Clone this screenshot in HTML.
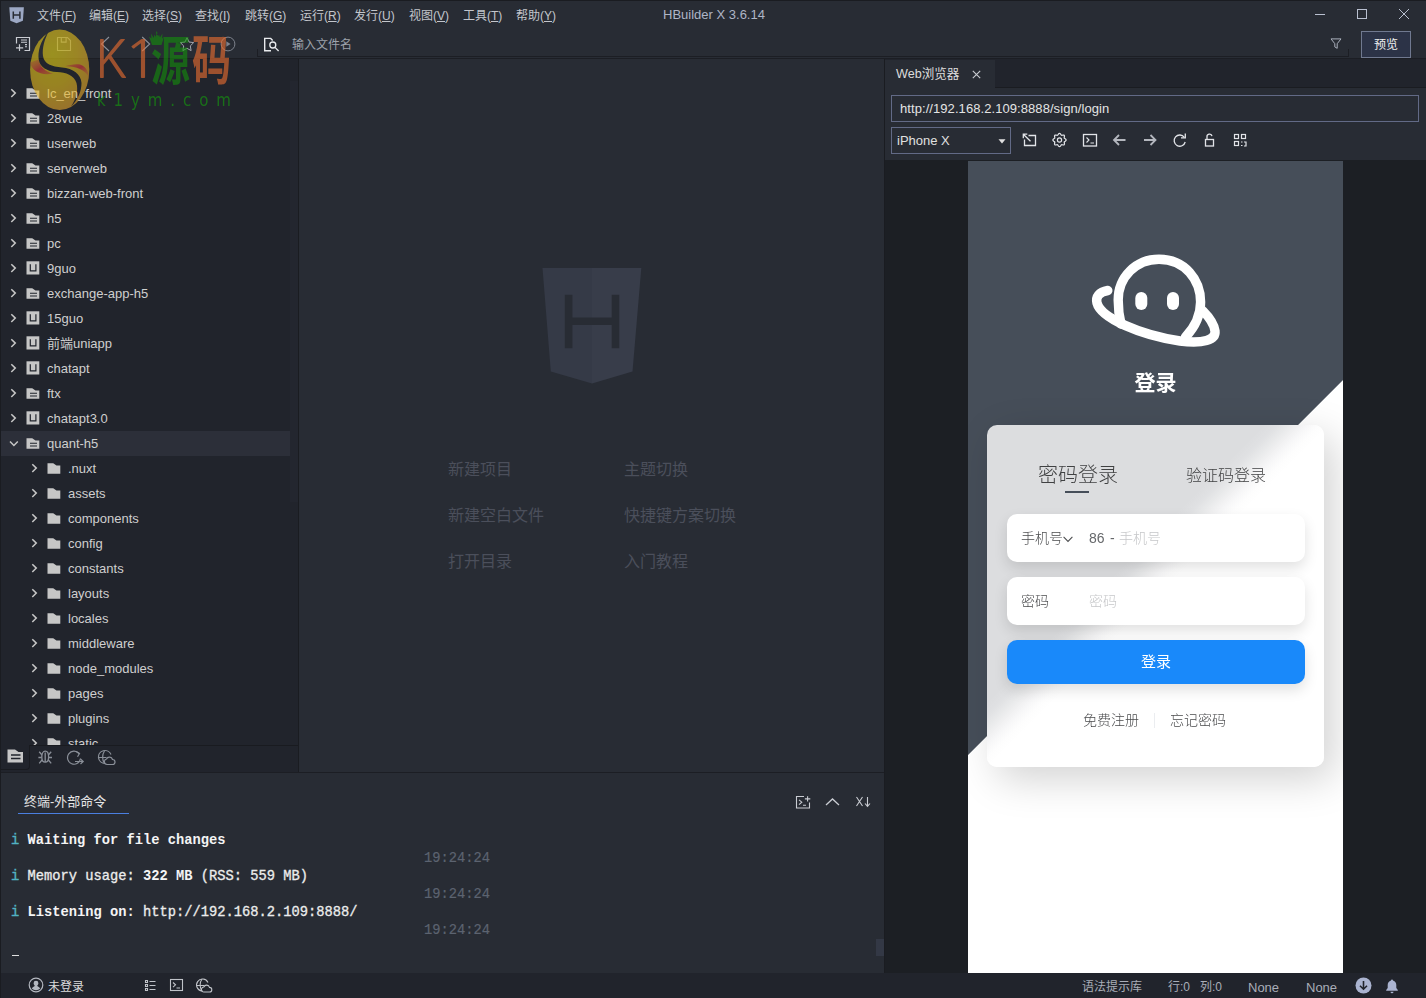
<!DOCTYPE html>
<html lang="zh-CN">
<head>
<meta charset="utf-8">
<title>HBuilder X 3.6.14</title>
<style>
*{box-sizing:border-box;margin:0;padding:0}
html,body{width:1426px;height:998px;overflow:hidden;background:#282c34}
body{position:relative;font-family:"Liberation Sans","Noto Sans CJK SC",sans-serif;font-size:13px;color:#c8c8c8;-webkit-font-smoothing:antialiased}
.abs{position:absolute}
svg{position:absolute;overflow:visible}
/* title + menu */
#titlebar{position:absolute;left:0;top:0;width:1426px;height:29px;background:#282c34}
.menu{position:absolute;top:1.500px;height:29px;line-height:29px;font-size:12px;color:#c3c6cc;white-space:nowrap}
#title{position:absolute;left:614px;width:200px;text-align:center;top:0;height:29px;line-height:29px;font-size:13px;color:#aeb5c6}
/* toolbar */
#toolbar{position:absolute;left:0;top:29px;width:1426px;height:30px;background:#282c34;border-bottom:1px solid #1c1e24}
#search{position:absolute;left:257px;top:33px;width:1092px;height:24px;border-bottom:1px solid #1c1e24}
#search:before,#search:after{content:"";position:absolute;bottom:0;width:1px;height:7px;background:#1c1e24}
#search:before{left:0}
#search:after{right:0}
#search span{position:absolute;left:35px;top:1px;line-height:23px;font-size:12px;color:#9da2ab}
#preview{position:absolute;left:1361px;top:31px;width:50px;height:27px;border:1px solid #707990;background:#2c3347;color:#f0f0f0;font-size:12px;text-align:center;line-height:27px}
/* sidebar */
#sidebar{position:absolute;left:0;top:59px;width:299px;height:713px;background:#21242c;border-right:1px solid #1a1c21;border-left:1px solid #1a1c21;overflow:hidden}
.row{position:absolute;left:0;width:290px;height:25px;line-height:25px;font-size:13px;color:#cfcfcf;white-space:nowrap}
.row.sel{background:#2c2f39}
.row span{position:absolute;top:0}
.l0 span{left:46px}
.l1 span{left:67px}
#sbtabs{position:absolute;left:0;top:686px;width:298px;height:27px;background:#21242c}
/* editor */
#editor{position:absolute;left:299px;top:59px;width:585px;height:713px;background:#282c34}
.hint{position:absolute;font-size:16px;color:#4b4f5b;white-space:nowrap;line-height:20px}
/* bottom */
#bottom{position:absolute;left:0;top:772px;width:884px;height:201px;background:#282c34;border-top:1px solid #1c1e24;border-left:1px solid #1a1c21}
.term{position:absolute;font-family:"Liberation Mono","Noto Sans Mono CJK SC",monospace;font-size:13.75px;white-space:pre;color:#ececec;line-height:18px;-webkit-text-stroke:.3px #ececec}
.term b{font-weight:bold;color:#f4f4f4;-webkit-text-stroke:0}
.term i{font-style:normal;color:#52b2c2;-webkit-text-stroke:.35px #52b2c2}
.term.ts{color:#5c6370;-webkit-text-stroke:.2px #5c6370}
/* status */
#status{position:absolute;left:0;top:973px;width:1426px;height:25px;background:#21242c}
.st{position:absolute;top:974.500px;height:25px;line-height:25px;font-size:12px;color:#a9aeb8;white-space:nowrap}
/* right */
#right{position:absolute;left:884px;top:59px;width:542px;height:914px;background:#1c1f24;border-left:1px solid #1a1c21}
#tabbar{position:absolute;left:885px;top:59px;width:541px;height:29px;background:#21242c;border-bottom:1px solid #1a1c21}
#tab{position:absolute;left:885px;top:60px;width:110px;height:28px;background:#282c34;color:#dcdcdc;font-size:12.600px;line-height:28px}
#navarea{position:absolute;left:885px;top:88px;width:541px;height:72px;background:#282c34}
#url{position:absolute;left:891px;top:95px;width:528px;height:27px;border:1px solid #626a86;color:#e4e4e4;font-size:13px;line-height:25px;padding-left:8px;letter-spacing:.07px}
#dev{position:absolute;left:891px;top:127px;width:120px;height:27px;border:1px solid #626a86;color:#e0e0e0;font-size:13px;line-height:25px;padding-left:5px}
/* phone */
#phone{will-change:transform;position:absolute;left:968px;top:161px;width:375px;height:812px;overflow:hidden;background:linear-gradient(135deg,#464e59 0,#464e59 419.6px,#ffffff 420.6px,#ffffff 100%);font-family:"Liberation Sans","Noto Sans CJK SC",sans-serif}
#card{position:absolute;left:19px;top:264px;width:337px;height:342px;border-radius:10px;background:linear-gradient(135deg,#dcdddf 0,#dcdddf 196px,#e0e1e3 205px,#e8e9ea 213px,#f0f0f1 220px,#f8f8f9 228px,#fdfdfd 235px,#fff 242px,#fff 100%);box-shadow:10px 12px 40px rgba(0,0,0,.18)}
.inp{position:absolute;left:20px;width:298px;height:48px;border-radius:10px;background:#fff;box-shadow:0 6px 14px rgba(0,0,0,.12);font-size:14px;line-height:48px;font-weight:300}
.inp span{position:absolute;top:0;white-space:nowrap}
#btn{position:absolute;left:20px;top:215px;width:298px;height:44px;border-radius:10px;background:#1989fa;color:#fff;font-size:15px;text-align:center;line-height:44px;box-shadow:0 6px 14px rgba(0,0,0,.12)}
#wm{position:absolute;left:0;top:0;width:300px;height:130px;opacity:.6;pointer-events:none}
</style>
</head>
<body>
<div id="titlebar"></div>
<svg style="left:9px;top:6.500px" width="16" height="17" viewBox="0 0 16 17"><path d="M0.300 0.300h14.600l-1 13.500L7.600 16.300 1.300 13.800z" fill="#9ca8c4"/><path d="M4.300 4.400v7.400M10.900 4.400v7.400M4.300 8h6.600" stroke="#282c34" stroke-width="1.500" fill="none"/></svg>
<div class="menu" style="left:37px">文件(<u>F</u>)</div>
<div class="menu" style="left:89px">编辑(<u>E</u>)</div>
<div class="menu" style="left:142px">选择(<u>S</u>)</div>
<div class="menu" style="left:195px">查找(<u>I</u>)</div>
<div class="menu" style="left:245px">跳转(<u>G</u>)</div>
<div class="menu" style="left:300px">运行(<u>R</u>)</div>
<div class="menu" style="left:354px">发行(<u>U</u>)</div>
<div class="menu" style="left:409px">视图(<u>V</u>)</div>
<div class="menu" style="left:463px">工具(<u>T</u>)</div>
<div class="menu" style="left:516px">帮助(<u>Y</u>)</div>
<svg style="left:1300px;top:0" width="126" height="29" viewBox="0 0 126 29" fill="none" stroke="#b9c0d0" stroke-width="1"><path d="M15 14.500h10"/><rect x="57.500" y="9.500" width="9" height="9"/><path d="M99 9l10 10M109 9l-10 10"/></svg>
<div id="title">HBuilder X 3.6.14</div>
<div id="toolbar"></div>
<div id="search"><span>输入文件名</span></div>
<svg id="tbicons" style="left:0;top:29px" width="300" height="30" viewBox="0 0 300 30" fill="none" stroke="#c9ccd2" stroke-width="1.2">
<g><path d="M16.500 14.500v-6h13v13h-5"/><path d="M21 11h6M21 13.300h6M25 15.600h2M25 17.700h2" stroke-width="1.1"/><path d="M16 18.800h7.200M19.500 15.300v6.800"/></g>
<g stroke="#7d828c" stroke-width="1.1"><path d="M57.500 8.500h10l3 3v10h-13z"/><path d="M61.300 8.500v4.600h4.800v-4.600"/></g>
<g stroke="#8b9099" stroke-width="1.100"><path d="M109 8l-7.500 7 7.500 7"/><path d="M142.200 8l7.500 7-7.500 7"/></g>
<path stroke="#a4a8b0" stroke-width="1" d="M187 8.700l2 4.300 4.700 .6-3.400 3.300 .8 4.700-4.100-2.300-4.100 2.300 .8-4.700-3.400-3.300 4.700-.6z"/>
<g stroke="#7d828c" stroke-width="1"><circle cx="228" cy="15" r="6.900"/><path d="M226.300 12.300l4.300 2.700-4.300 2.700z" fill="#7d828c" stroke="none"/></g>
<g stroke="#e9ebee" stroke-width="1.400"><path d="M271 21.800h-6.300v-12.400h6l2 2"/><circle cx="272.800" cy="16" r="3" stroke-width="1.300"/><path d="M275 18.400l3.600 3.600" stroke-width="1.300"/></g>
</svg>
<svg style="left:1330px;top:38px" width="12" height="12" viewBox="0 0 12 12" fill="none" stroke="#aab0bc" stroke-width="1"><path d="M1 .9h10l-3.800 4.800v4.600l-2.400-1.400v-3.200z"/></svg>
<div id="preview">预览</div>
<div id="sidebar">
<svg width="0" height="0" style="position:absolute"><defs>
<symbol id="ip" viewBox="0 0 14 12"><path d="M0.500 0.200h5.700l3.300 2.200h3.800v8.400h-12.800z" fill="#c6c6c6"/><path d="M4 5.300h7M4 8h7" stroke="#21242c" stroke-width="1.100"/></symbol>
<symbol id="iu" viewBox="0 0 14 14"><rect x=".5" y=".3" width="12.800" height="13.200" fill="#c6c6c6"/><path d="M4.300 3.300v6.500h5.600v-6.500" fill="none" stroke="#21242c" stroke-width="1.200"/></symbol>
<symbol id="if" viewBox="0 0 14 12"><path d="M0.500 0.200h5.700l3.300 2.200h3.800v8.400h-12.800z" fill="#c6c6c6"/></symbol>
<symbol id="cr" viewBox="0 0 8 12"><path d="M1.300 2.200l4 3.900-4 3.900" fill="none" stroke="#c6c6c6" stroke-width="1.500"/></symbol>
<symbol id="cd" viewBox="0 0 12 8"><path d="M2 1.500l3.900 4 3.900-4" fill="none" stroke="#c6c6c6" stroke-width="1.500"/></symbol>
</defs></svg>
<div class="row l0" style="top:22px"><svg style="left:9px;top:6px" width="8" height="12"><use href="#cr"/></svg><svg style="left:25px;top:7px" width="14" height="12"><use href="#ip"/></svg><span>lc_en_front</span></div>
<div class="row l0" style="top:47px"><svg style="left:9px;top:6px" width="8" height="12"><use href="#cr"/></svg><svg style="left:25px;top:7px" width="14" height="12"><use href="#ip"/></svg><span>28vue</span></div>
<div class="row l0" style="top:72px"><svg style="left:9px;top:6px" width="8" height="12"><use href="#cr"/></svg><svg style="left:25px;top:7px" width="14" height="12"><use href="#ip"/></svg><span>userweb</span></div>
<div class="row l0" style="top:97px"><svg style="left:9px;top:6px" width="8" height="12"><use href="#cr"/></svg><svg style="left:25px;top:7px" width="14" height="12"><use href="#ip"/></svg><span>serverweb</span></div>
<div class="row l0" style="top:122px"><svg style="left:9px;top:6px" width="8" height="12"><use href="#cr"/></svg><svg style="left:25px;top:7px" width="14" height="12"><use href="#ip"/></svg><span>bizzan-web-front</span></div>
<div class="row l0" style="top:147px"><svg style="left:9px;top:6px" width="8" height="12"><use href="#cr"/></svg><svg style="left:25px;top:7px" width="14" height="12"><use href="#ip"/></svg><span>h5</span></div>
<div class="row l0" style="top:172px"><svg style="left:9px;top:6px" width="8" height="12"><use href="#cr"/></svg><svg style="left:25px;top:7px" width="14" height="12"><use href="#ip"/></svg><span>pc</span></div>
<div class="row l0" style="top:197px"><svg style="left:9px;top:6px" width="8" height="12"><use href="#cr"/></svg><svg style="left:25px;top:5px" width="14" height="14"><use href="#iu"/></svg><span>9guo</span></div>
<div class="row l0" style="top:222px"><svg style="left:9px;top:6px" width="8" height="12"><use href="#cr"/></svg><svg style="left:25px;top:7px" width="14" height="12"><use href="#ip"/></svg><span>exchange-app-h5</span></div>
<div class="row l0" style="top:247px"><svg style="left:9px;top:6px" width="8" height="12"><use href="#cr"/></svg><svg style="left:25px;top:5px" width="14" height="14"><use href="#iu"/></svg><span>15guo</span></div>
<div class="row l0" style="top:272px"><svg style="left:9px;top:6px" width="8" height="12"><use href="#cr"/></svg><svg style="left:25px;top:5px" width="14" height="14"><use href="#iu"/></svg><span>前端uniapp</span></div>
<div class="row l0" style="top:297px"><svg style="left:9px;top:6px" width="8" height="12"><use href="#cr"/></svg><svg style="left:25px;top:5px" width="14" height="14"><use href="#iu"/></svg><span>chatapt</span></div>
<div class="row l0" style="top:322px"><svg style="left:9px;top:6px" width="8" height="12"><use href="#cr"/></svg><svg style="left:25px;top:7px" width="14" height="12"><use href="#ip"/></svg><span>ftx</span></div>
<div class="row l0" style="top:347px"><svg style="left:9px;top:6px" width="8" height="12"><use href="#cr"/></svg><svg style="left:25px;top:5px" width="14" height="14"><use href="#iu"/></svg><span>chatapt3.0</span></div>
<div class="row l0 sel" style="top:372px"><svg style="left:7px;top:9px" width="12" height="8"><use href="#cd"/></svg><svg style="left:25px;top:7px" width="14" height="12"><use href="#ip"/></svg><span>quant-h5</span></div>
<div class="row l1" style="top:397px"><svg style="left:30px;top:6px" width="8" height="12"><use href="#cr"/></svg><svg style="left:46px;top:7px" width="14" height="12"><use href="#if"/></svg><span>.nuxt</span></div>
<div class="row l1" style="top:422px"><svg style="left:30px;top:6px" width="8" height="12"><use href="#cr"/></svg><svg style="left:46px;top:7px" width="14" height="12"><use href="#if"/></svg><span>assets</span></div>
<div class="row l1" style="top:447px"><svg style="left:30px;top:6px" width="8" height="12"><use href="#cr"/></svg><svg style="left:46px;top:7px" width="14" height="12"><use href="#if"/></svg><span>components</span></div>
<div class="row l1" style="top:472px"><svg style="left:30px;top:6px" width="8" height="12"><use href="#cr"/></svg><svg style="left:46px;top:7px" width="14" height="12"><use href="#if"/></svg><span>config</span></div>
<div class="row l1" style="top:497px"><svg style="left:30px;top:6px" width="8" height="12"><use href="#cr"/></svg><svg style="left:46px;top:7px" width="14" height="12"><use href="#if"/></svg><span>constants</span></div>
<div class="row l1" style="top:522px"><svg style="left:30px;top:6px" width="8" height="12"><use href="#cr"/></svg><svg style="left:46px;top:7px" width="14" height="12"><use href="#if"/></svg><span>layouts</span></div>
<div class="row l1" style="top:547px"><svg style="left:30px;top:6px" width="8" height="12"><use href="#cr"/></svg><svg style="left:46px;top:7px" width="14" height="12"><use href="#if"/></svg><span>locales</span></div>
<div class="row l1" style="top:572px"><svg style="left:30px;top:6px" width="8" height="12"><use href="#cr"/></svg><svg style="left:46px;top:7px" width="14" height="12"><use href="#if"/></svg><span>middleware</span></div>
<div class="row l1" style="top:597px"><svg style="left:30px;top:6px" width="8" height="12"><use href="#cr"/></svg><svg style="left:46px;top:7px" width="14" height="12"><use href="#if"/></svg><span>node_modules</span></div>
<div class="row l1" style="top:622px"><svg style="left:30px;top:6px" width="8" height="12"><use href="#cr"/></svg><svg style="left:46px;top:7px" width="14" height="12"><use href="#if"/></svg><span>pages</span></div>
<div class="row l1" style="top:647px"><svg style="left:30px;top:6px" width="8" height="12"><use href="#cr"/></svg><svg style="left:46px;top:7px" width="14" height="12"><use href="#if"/></svg><span>plugins</span></div>
<div class="row l1" style="top:672px"><svg style="left:30px;top:6px" width="8" height="12"><use href="#cr"/></svg><svg style="left:46px;top:7px" width="14" height="12"><use href="#if"/></svg><span>static</span></div>
<div class="abs" style="left:289px;top:22px;width:8px;height:421px;background:#23262f"></div>
<div id="sbtabs"><div class="abs" style="left:-1px;top:0;width:30px;height:25px;background:#21242c;border-right:1px solid #191b20;border-bottom:1px solid #191b20;border-bottom-right-radius:4px"></div>
<div class="abs" style="left:28px;top:0;width:270px;height:1px;background:#191b20"></div>
<svg style="left:0;top:-1px" width="130" height="28" viewBox="0 0 130 28" fill="none" stroke="#8a8f98" stroke-width="1.200">
<path d="M6.500 5.500h7.500l3.500 2.500h4.500v10.500h-15.500z" fill="#c6c6c6" stroke="none"/><path d="M10 11h9.500M10 14.500h9.500" stroke="#21242c" stroke-width="1.400"/>
<g stroke-width="1.300"><path d="M40.800 13c0-3.500 1.400-5.800 3.400-5.800s3.400 2.300 3.400 5.800c0 3-1.400 5.200-3.400 5.200s-3.400-2.200-3.400-5.200z"/><path d="M44.200 8.500v9.500M40.800 10.800l-2.600-3M47.600 10.800l2.600-3M40.600 13.500h-3.200M47.800 13.500h3.200M41 16l-2.800 3.300M47.400 16l2.800 3.300"/></g>
<g><path d="M78 9.500a6.500 6.500 0 1 0 1.500 5"/><path d="M75 7.500l3.500 2-2 3.300M74 17.500h8M79.500 15l2.700 2.500-2.700 2.500"/></g>
<g><path d="M104 19.500a6.500 6.500 0 1 1 6-9"/><path d="M97.500 13.500h8M103.500 7c-2.500 3.500-2.500 9 0 12.500"/><path d="M106 20.500h5.500a2.500 2.500 0 0 0 0-5 3.200 3.200 0 0 0-6-.5 2.800 2.800 0 0 0 .5 5.500z"/></g>
</svg></div>
</div>
<div id="editor">
<svg style="left:243px;top:209px" width="100" height="116" viewBox="0 0 100 116"><path d="M0.500 0h49.500v115.500L8.800 103.600z" fill="#353a47"/><path d="M50 0h49.300L90.500 103.600 50 115.500z" fill="#383d4a"/><path d="M26.600 26.800v53.400M73.500 26.800v53.400M26.600 53.200h46.900" stroke="#282c34" stroke-width="7.600" fill="none"/></svg>
<div class="hint" style="left:149px;top:401px">新建项目</div>
<div class="hint" style="left:325px;top:401px">主题切换</div>
<div class="hint" style="left:149px;top:447px">新建空白文件</div>
<div class="hint" style="left:325px;top:447px">快捷键方案切换</div>
<div class="hint" style="left:149px;top:493px">打开目录</div>
<div class="hint" style="left:325px;top:493px">入门教程</div>
</div>
<div id="bottom">
<div class="abs" style="left:23px;top:19px;font-size:13px;color:#e6e6e6;line-height:20px">终端-外部命令</div>
<div class="abs" style="left:17px;top:40px;width:111px;height:1px;background:#4a7fe0"></div>
<svg style="left:790px;top:18px" width="90" height="22" viewBox="0 0 90 22" fill="none" stroke="#c9ccd2" stroke-width="1.100">
<path d="M13 5.500h-7.500v11.500h13v-5.500"/><path d="M8 8.800l2.800 2.400-2.800 2.400M12 14.300h3M16.600 5.200v5.400M13.900 7.900h5.400"/>
<path d="M35 14l6.500-6 6.500 6" stroke-width="1.300"/>
<path d="M65.500 6l6 9M71.500 6l-6 9M76.500 6v9M74 12.500l2.500 2.800 2.500-2.800"/>
</svg>
<div class="term" style="left:10px;top:59px"><i>i</i> <b>Waiting for file changes</b></div>
<div class="term ts" style="left:423px;top:77px">19:24:24</div>
<div class="term" style="left:10px;top:95px"><i>i</i> Memory usage: <b>322 MB</b> (RSS: 559 MB)</div>
<div class="term ts" style="left:423px;top:113px">19:24:24</div>
<div class="term" style="left:10px;top:131px"><i>i</i> <b>Listening on:</b> http://192.168.2.109:8888/</div>
<div class="term ts" style="left:423px;top:149px">19:24:24</div>
<div class="abs" style="left:11px;top:182px;width:7px;height:1px;background:#e0e0e0"></div>
<div class="abs" style="left:875px;top:166px;width:8px;height:17px;background:#333845"></div>
</div>
<div id="status"></div>
<svg style="left:28px;top:977px" width="16" height="16" viewBox="0 0 16 16" fill="none" stroke="#b4b8c0" stroke-width="1.200"><circle cx="8" cy="8" r="6.800"/><path d="M8 3.800a2.400 2.400 0 0 1 2.400 2.400c0 1.300-.8 2-1.200 2.500 0 .8 2.300 1 3 2.800a5.800 5.800 0 0 1-8.400 0c.7-1.800 3-2 3-2.800-.4-.5-1.200-1.200-1.200-2.500a2.400 2.400 0 0 1 2.400-2.400z" fill="#b4b8c0" stroke="none"/></svg>
<div class="st" style="left:48px;color:#dcdcdc">未登录</div>
<svg style="left:140px;top:976px" width="80" height="18" viewBox="0 0 80 18" fill="none" stroke="#c0c3c9" stroke-width="1.100">
<path d="M5.500 4.500h2v2h-2zM5.500 8.500h2v2h-2zM5.500 12.500h2v2h-2zM9.500 5.500h6M9.500 9.500h6M9.500 13.500h6"/>
<rect x="30.500" y="3.500" width="12" height="11"/><path d="M33 6.500l2.500 2.300-2.500 2.300M36.500 12h3.500"/>
<path d="M62 15a6 6 0 1 1 6-8.500"/><path d="M56 9.500h8M62 3c-2.500 3.500-2.500 8.500 0 12"/><path d="M64 16h5.500a2.300 2.300 0 0 0 0-4.600 3 3 0 0 0-5.700-.4 2.500 2.500 0 0 0 .2 5z"/>
</svg>
<div class="st" style="left:1082px">语法提示库</div>
<div class="st" style="left:1168px">行:0</div>
<div class="st" style="left:1200px">列:0</div>
<div class="st" style="left:1248px;font-size:13px">None</div>
<div class="st" style="left:1306px;font-size:13px">None</div>
<svg style="left:1355px;top:977px" width="50" height="17" viewBox="0 0 50 17"><circle cx="8.500" cy="8.500" r="8" fill="#aab3d0"/><path d="M8.500 4v8M5 8.700l3.500 3.500 3.500-3.500" stroke="#21242c" stroke-width="1.600" fill="none"/><path d="M37 2.500a1 1 0 0 1 1 1c2.200.6 3.300 2.300 3.300 4.500v3l1.500 2v.8h-11.600v-.8l1.500-2v-3c0-2.200 1.100-3.900 3.300-4.500a1 1 0 0 1 1-1zM35.500 14.800h3a1.500 1.500 0 0 1-3 0z" fill="#aab3d0"/></svg>
<div id="right"></div>
<div id="tabbar"></div>
<div id="tab"><span class="abs" style="left:11px;top:0">Web浏览器</span>
<svg style="left:87px;top:10px" width="9" height="9" viewBox="0 0 9 9" stroke="#c9ccd2" stroke-width="1.100"><path d="M.8 .8l7.400 7.400M8.200 .8l-7.400 7.400"/></svg></div>
<div id="navarea"></div>
<div id="url">http://192.168.2.109:8888/sign/login</div>
<div id="dev">iPhone X<svg style="left:106px;top:11px" width="8" height="5" viewBox="0 0 8 5"><path d="M.5 .3h7L4 4.600z" fill="#e0e0e0"/></svg></div>
<svg style="left:1015px;top:126px" width="240" height="28" viewBox="0 0 240 28" fill="none" stroke="#e2e4e8" stroke-width="1.300">
<g><path d="M13.500 9.500h7v10h-11v-6"/><path d="M8.300 8.200l7.200 7M8.300 12.200v-4h4"/></g>
<g stroke-width="1.200" stroke-linejoin="round"><circle cx="44.500" cy="14" r="2.100"/><path d="M44.50 7.35L44.93 7.46L45.32 7.78L45.65 8.21L45.93 8.66L46.19 9.03L46.47 9.24L46.82 9.29L47.26 9.22L47.78 9.09L48.32 9.02L48.82 9.08L49.20 9.30L49.42 9.68L49.48 10.18L49.41 10.72L49.28 11.24L49.21 11.68L49.26 12.03L49.47 12.31L49.84 12.57L50.29 12.85L50.72 13.18L51.04 13.57L51.15 14.00L51.04 14.43L50.72 14.82L50.29 15.15L49.84 15.43L49.47 15.69L49.26 15.97L49.21 16.32L49.28 16.76L49.41 17.28L49.48 17.82L49.42 18.32L49.20 18.70L48.82 18.92L48.32 18.98L47.78 18.91L47.26 18.78L46.82 18.71L46.47 18.76L46.19 18.97L45.93 19.34L45.65 19.79L45.32 20.22L44.93 20.54L44.50 20.65L44.07 20.54L43.68 20.22L43.35 19.79L43.07 19.34L42.81 18.97L42.53 18.76L42.18 18.71L41.74 18.78L41.22 18.91L40.68 18.98L40.18 18.92L39.80 18.70L39.58 18.32L39.52 17.82L39.59 17.28L39.72 16.76L39.79 16.32L39.74 15.97L39.53 15.69L39.16 15.43L38.71 15.15L38.28 14.82L37.96 14.43L37.85 14.00L37.96 13.57L38.28 13.18L38.71 12.85L39.16 12.57L39.53 12.31L39.74 12.03L39.79 11.68L39.72 11.24L39.59 10.72L39.52 10.18L39.58 9.68L39.80 9.30L40.18 9.08L40.68 9.02L41.22 9.09L41.74 9.22L42.18 9.29L42.53 9.24L42.81 9.03L43.07 8.66L43.35 8.21L43.68 7.78L44.07 7.46z"/></g>
<g><rect x="68.500" y="8.500" width="13" height="11.500"/><path d="M71.500 11.500l2.500 2.500-2.500 2.500M75.500 17h3.500" stroke-width="1.100"/></g>
<g stroke="#b4b7be" stroke-width="1.800"><path d="M110.500 14h-11.500M104 9l-5 5 5 5"/><path d="M129 14h11.500M135.500 9l5 5-5 5"/></g>
<g><path d="M169.300 11.300a5.600 5.600 0 1 0 .9 4.700" stroke-width="1.300"/><path d="M170.300 7.500v4.300h-4.300" stroke-width="1.300"/></g>
<g><rect x="190.500" y="13.500" width="8" height="6.500"/><path d="M192 13.500v-2.500a2.500 2.500 0 0 1 5-.800"/></g>
<g stroke-width="1.200"><rect x="219.500" y="8.500" width="4" height="4"/><rect x="226.500" y="8.500" width="4" height="4"/><rect x="219.500" y="15.500" width="4" height="4"/><path d="M226 16h1.500M229 16h2v4h-2M226 19.500h1.500"/></g>
</svg>
<div id="phone">
<svg id="logo" style="left:118px;top:88px" width="140" height="104" viewBox="1086 249 140 104" fill="none" stroke="#fff" stroke-width="9.400" stroke-linecap="round" stroke-linejoin="round">
<path d="M1121 324C1119 316 1118.200 308 1118.200 300C1118.200 277 1136 259.200 1159 259.200C1185 259.200 1200.600 280 1200.600 302C1200.600 316 1194 328 1185.500 337"/>
<path d="M1107.800 290.500C1099 292 1095.500 297 1097 303C1101 318 1140 335 1180 341C1203 344 1216 340 1215 331C1214 324 1209 317 1203 311"/>
<rect x="1135.300" y="292" width="12" height="18" rx="6" fill="#fff" stroke="none"/>
<rect x="1167" y="292" width="12" height="18" rx="6" fill="#fff" stroke="none"/>
</svg>
<div class="abs" style="left:0;top:207px;width:375px;text-align:center;font-size:21px;font-weight:bold;color:#fff;line-height:30px">登录</div>
<div id="card">
<div class="abs" style="left:51px;top:35px;font-size:20px;color:#404142;line-height:30px;font-weight:300">密码登录</div>
<div class="abs" style="left:78px;top:66px;width:24px;height:2px;background:#464e59"></div>
<div class="abs" style="left:199px;top:36.500px;font-size:16px;color:#404142;line-height:28px;font-weight:300">验证码登录</div>
<div class="inp" style="top:89px"><span style="left:14px;color:#4a4b4d">手机号</span><svg style="left:55.700px;top:21.500px" width="10" height="7" viewBox="0 0 10 7" fill="none" stroke="#4a4b4d" stroke-width="1.050"><path d="M.6 .8l4.400 4.600 4.400-4.600"/></svg><span style="left:82px;color:#66686b">86</span><span style="left:103px;color:#66686b">-</span><span style="left:112px;color:#c6c7c9">手机号</span></div>
<div class="inp" style="top:152px"><span style="left:14px;color:#4a4b4d">密码</span><span style="left:82px;color:#c6c7c9">密码</span></div>
<div id="btn">登录</div>
<div class="abs" style="left:96px;top:284px;font-size:14px;color:#4a4b4d;line-height:22px;font-weight:300">免费注册</div>
<div class="abs" style="left:167px;top:288px;width:1px;height:15px;background:#ebedf0"></div>
<div class="abs" style="left:183px;top:284px;font-size:14px;color:#4a4b4d;line-height:22px;font-weight:300">忘记密码</div>
</div>
</div>
<div id="wm">
<svg style="left:28px;top:28px" width="64" height="84" viewBox="28 28 64 84">
<defs>
<radialGradient id="wg1" cx="0.38" cy="0.30" r="0.80"><stop offset="0" stop-color="#e6d414"/><stop offset=".5" stop-color="#e8c21c"/><stop offset="1" stop-color="#e8a030"/></radialGradient>
<linearGradient id="wr1" x1="0" y1="0" x2="1" y2="1"><stop offset="0" stop-color="#e87838" stop-opacity=".3"/><stop offset=".55" stop-color="#e23c3c"/><stop offset="1" stop-color="#e23c3c" stop-opacity=".4"/></linearGradient>
<linearGradient id="wr2" x1="0" y1="0" x2="1" y2="1"><stop offset="0" stop-color="#e23c3c" stop-opacity=".4"/><stop offset=".45" stop-color="#e23c3c"/><stop offset="1" stop-color="#e87838" stop-opacity=".3"/></linearGradient>
<mask id="wmk"><rect x="28" y="28" width="64" height="84" fill="#fff"/><path d="M49 31C40 41 37.500 52 38.800 60C40 67 47 71.500 57 72C66 72.500 74 75 76.500 83C78.500 91 76 99 71 106.500C78 100 81.500 91 81.500 83C81 74 73 68.500 62 67.500C52 66.500 44 64 43 56C42 48 44.500 39 49 31z" fill="#000"/></mask>
</defs>
<g mask="url(#wmk)">
<ellipse cx="59.700" cy="69.800" rx="29.600" ry="40.200" fill="url(#wg1)"/>
<path d="M30 62.500C32 71 41 76 53 73.500C45 71.500 40 67 38.500 59.500C36 60.500 33 61.500 30 62.500z" fill="url(#wr1)"/>
<path d="M65 66.300C76 66 84.500 69.500 89 77C88.500 71 85 66 80 64.500C75 63.500 69.500 64.800 65 66.300z" fill="url(#wr2)"/>
</g>
</svg>
<div class="abs" id="wk" style="left:94.200px;top:29px;font-family:'NanumGothic','Liberation Sans',sans-serif;font-size:52px;line-height:60px;color:#f07030;white-space:nowrap;transform-origin:0 0;transform:scale(1,1)">K</div>
<div class="abs" id="w1" style="left:122.600px;top:29px;font-family:'NanumGothic','Liberation Sans',sans-serif;font-size:52px;line-height:60px;color:#f07030;white-space:nowrap;transform-origin:0 0;transform:scale(1.150,1)">1</div>
<div class="abs" style="left:151px;top:29.500px;font-size:39px;line-height:48px;font-weight:bold;white-space:nowrap;transform-origin:0 0;transform:scale(1,1.355);letter-spacing:2px"><span style="color:#14900c">源</span><span style="color:#f07030">码</span></div>
<svg style="left:149px;top:31px" width="15" height="17" viewBox="0 0 15 17"><path d="M7.500 0l1.300 2.500h-.8v5l2.200-4 .5 3.500 2.800-4.500-.5 5 2-2-2.500 8.500h-9.500l-3-8.500 2.500 2-.5-5 2.800 4.500 .5-3.500 2.200 4v-5h-.8z" fill="#14900c"/></svg>
<div class="abs" style="left:97px;top:90px;font-family:'DejaVu Sans','Liberation Sans',sans-serif;font-size:15px;line-height:20px;color:#14a00c;letter-spacing:7.900px;white-space:nowrap;transform-origin:0 50%;transform:scale(1,1.150)">k1ym.com</div>
</div>
<div class="abs" style="left:0;top:0;width:1426px;height:1px;background:#1a1c21"></div>
<div class="abs" style="left:0;top:0;width:1px;height:998px;background:#1a1c21"></div>
</body>
</html>
